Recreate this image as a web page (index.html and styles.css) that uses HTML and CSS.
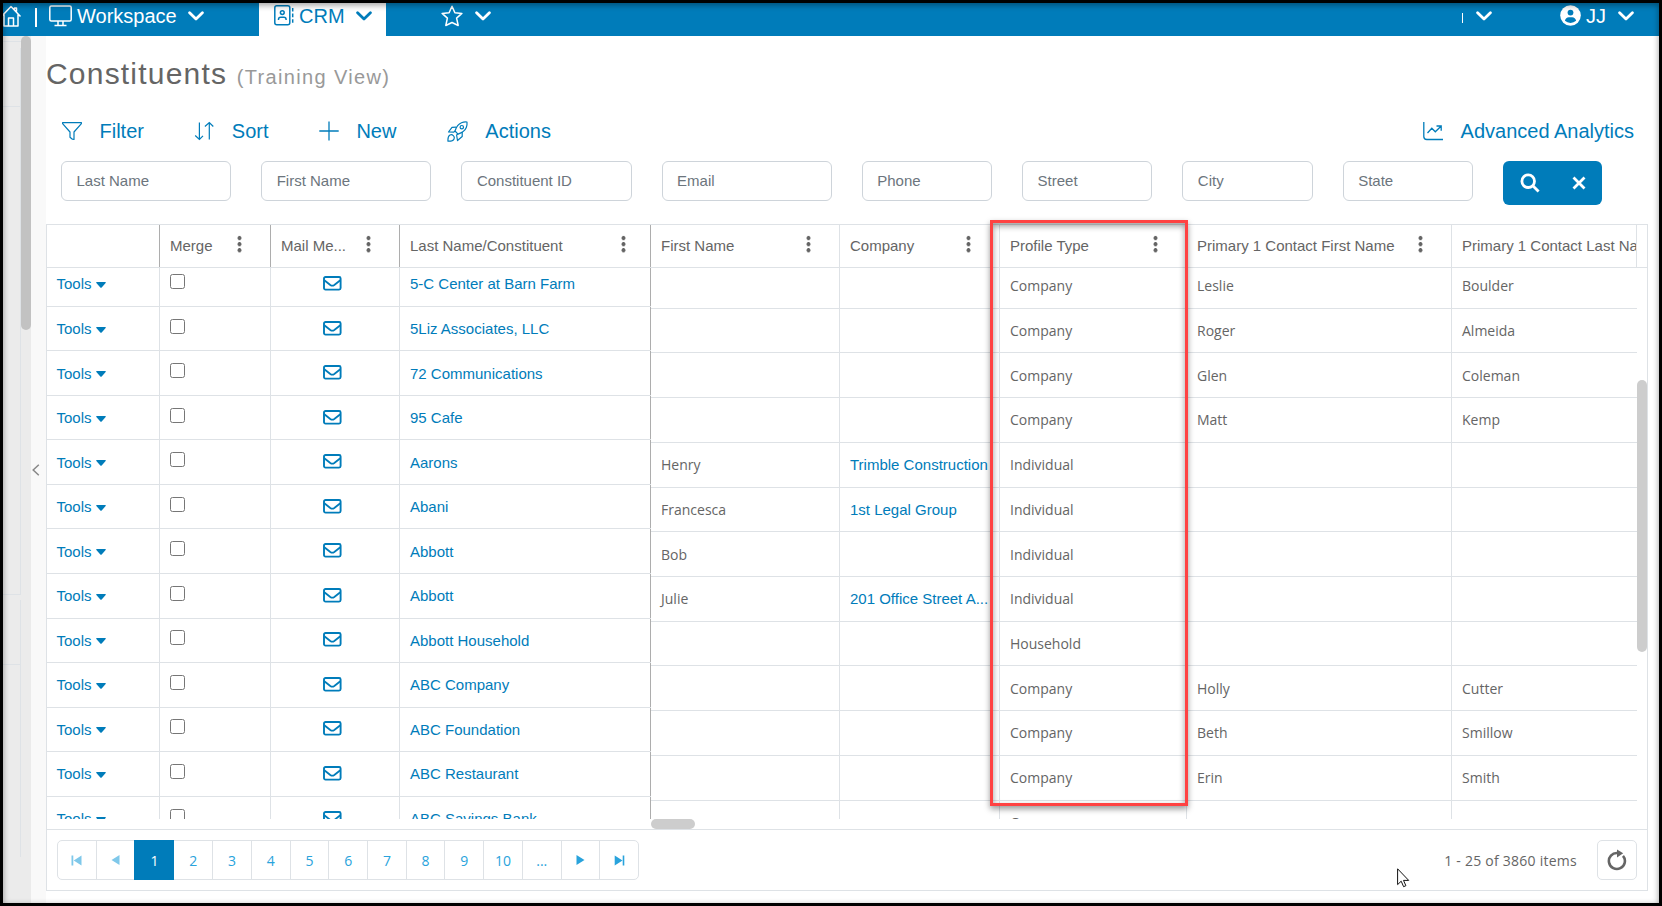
FILE: index.html
```html
<!DOCTYPE html>
<html lang="en">
<head>
    <meta charset="UTF-8">
    <meta name="viewport" content="width=device-width, initial-scale=1.0">
    <title>CRM - Constituents</title>
    <link rel="stylesheet" href="styles.css">
</head>
<body>
    <!-- shared icons -->
    <svg class="defs">
        <symbol id="chev" viewBox="0 0 16 10"><path d="M1.6 1.8 8 8l6.4-6.2" fill="none" stroke="currentColor" stroke-width="2.8" stroke-linecap="round" stroke-linejoin="round"/></symbol>
        <symbol id="mail" viewBox="0 0 19 15"><rect x="1" y="1" width="16.6" height="12.6" rx="1.5" fill="none" stroke="currentColor" stroke-width="1.9"/><path d="M1.3 4.2 7.3 9q2 1.4 4 0l6-4.8" fill="none" stroke="currentColor" stroke-width="1.8"/></symbol>
        <symbol id="caret" viewBox="0 0 10 6"><path d="M.9 0h8.2q1.2.2.5 1.1L5.7 5.5q-.7.7-1.4 0L.4 1.1Q-.3.2.9 0z" fill="currentColor"/></symbol>
    </svg>

    <!-- top bar -->
    <header class="topbar">
        <a class="home" href="#">
            <svg width="21" height="22" viewBox="0 0 21 22" fill="none" stroke="currentColor" stroke-width="1.5" stroke-linejoin="round"><path d="M.5 11.5 10 1.5l9.5 10M3 9.5V21h14V9.5M15.5 6.5V3h-2v1.5"/><path d="M7.5 21v-8h5v8"/></svg>
        </a>
        <span class="bar"></span>
        <a class="workspace" href="#">
            <svg width="23" height="22" viewBox="0 0 23 22" fill="none" stroke="currentColor" stroke-width="1.5"><rect x=".8" y="1" width="21.4" height="15" rx="1.5"/><path d="M9 16v4M14 16v4M5.5 20.4h12"/></svg>
            <span>Workspace</span>
            <svg class="chev"><use href="#chev"/></svg>
        </a>
        <a class="tab" href="#">
            <svg width="20" height="21" viewBox="0 0 20 21" fill="none" stroke="currentColor" stroke-width="1.5"><rect x=".8" y=".8" width="15" height="19" rx="2"/><circle cx="8.3" cy="7.6" r="1.9"/><path d="M4.5 15v-.6q0-2.2 2.2-2.2h3.2q2.2 0 2.2 2.2v.6"/><path d="M18.7 3v15" stroke-dasharray="3.6 2"/></svg>
            <span>CRM</span>
            <svg class="chev"><use href="#chev"/></svg>
        </a>
        <a class="fav" href="#">
            <svg width="22" height="22" viewBox="0 0 22 22" fill="none" stroke="currentColor" stroke-width="1.5" stroke-linejoin="round"><path d="m11 1.2 2.9 6.5 7 .7-5.3 4.7 1.6 7.4-6.2-3-6.2 3 1.6-7.4L1.1 8.4l7-.7z"/></svg>
            <svg class="chev"><use href="#chev"/></svg>
        </a>
        <a class="org" href="#">
            <span class="tick"></span>
            <svg class="chev"><use href="#chev"/></svg>
        </a>
        <a class="user" href="#">
            <svg width="21" height="21" viewBox="0 0 21 21"><circle cx="10.5" cy="10.5" r="10.3" fill="#fff"/><circle cx="10.5" cy="7.6" r="2.9" fill="#007cba"/><path d="M4.9 15.8q.8-3.6 4-3.6h3.2q3.2 0 4 3.6-2.300 2.100-5.600 2.100t-5.600-2.100z" fill="#007cba"/></svg>
            <span>JJ</span>
            <svg class="chev"><use href="#chev"/></svg>
        </a>
    </header>

    <div class="page">
        <!-- collapsed side panel -->
        <aside class="side">
            <div class="side-list">
                <div class="s1"></div>
                <div class="s2"></div>
                <div class="s3"></div>
                <div class="s4"></div>
                <div class="s5"></div>
            </div>
            <div class="side-scroll"></div>
        </aside>
        <div class="splitter">
            <svg width="8" height="12" viewBox="0 0 8 12"><path d="M6.800.7 1.200 6l5.600 5.300" fill="none" stroke="#888" stroke-width="1.500"/></svg>
        </div>

        <main class="main">
            <h1 class="title">Constituents <small>(Training View)</small></h1>

            <div class="toolbar">
                <a href="#">
                    <svg width="20" height="20" viewBox="0 0 20 20" fill="none" stroke="currentColor" stroke-width="1.200" stroke-linejoin="round"><path d="M.6 2.600v-1h18.800v1L12 11v7.400l-1.600-.2-2.400-2V11z"/></svg>
                    <span>Filter</span>
                </a>
                <a href="#">
                    <svg width="20" height="20" viewBox="0 0 20 20" fill="none" stroke="currentColor" stroke-width="1.200"><path d="M5.400 1.500v17M1.200 14.500l4.200 4 3.600-3.600M15.300 18.500v-17M10.900 5.500l4.400-4 4 4"/></svg>
                    <span>Sort</span>
                </a>
                <a href="#">
                    <svg width="20" height="20" viewBox="0 0 20 20" fill="none" stroke="currentColor" stroke-width="1.300"><path d="M10 .5v19M.3 10h19.400"/></svg>
                    <span>New</span>
                </a>
                <a href="#">
                    <svg width="21" height="21" viewBox="0 0 21 21" fill="none" stroke="currentColor" stroke-width="1.200" stroke-linejoin="round"><path d="M8 10Q10 3.500 14.500 1.700 17 .7 20 1q.3 3-.7 5.500-1.800 4.500-8.300 6.600z"/><circle cx="14.800" cy="6.200" r="1.700"/><path d="M9.300 6.200 5 6.400 1.500 11l5.300.2L8 10M15.200 11v4.500L10.500 19.500 9.600 14l1.400-1"/><path d="M1 20.200q-.4-5 2-6.200 1.800-.8 3.300.6t.7 3.300q-1 2.500-6 2.300z"/></svg>
                    <span>Actions</span>
                </a>
                <a class="analytics" href="#">
                    <svg width="20" height="20" viewBox="0 0 20 20" fill="none" stroke="currentColor" stroke-width="1.300"><path d="M.8 1v14.500q0 3 3 3H20"/><path d="m4.500 12 4.300-4.700 3.500 3.500L18 5.300M13.500 5h4.700v4.700"/></svg>
                    <span>Advanced Analytics</span>
                </a>
            </div>

            <form class="search">
                <input type="text" placeholder="Last Name">
                <input type="text" placeholder="First Name">
                <input type="text" placeholder="Constituent ID">
                <input type="text" placeholder="Email">
                <input type="text" class="short" placeholder="Phone">
                <input type="text" class="short" placeholder="Street">
                <input type="text" class="short" placeholder="City">
                <input type="text" class="short" placeholder="State">
                <div class="search-btn">
                    <svg width="20" height="20" viewBox="0 0 20 20" fill="none" stroke="#fff" stroke-width="2.800"><circle cx="8.200" cy="8.200" r="6.300"/><path d="m12.800 12.800 5.800 5.800"/></svg>
                    <svg width="14" height="14" viewBox="0 0 14 14" fill="none" stroke="#fff" stroke-width="2.800"><path d="m1.500 1.500 11 11M12.500 1.500l-11 11"/></svg>
                </div>
            </form>

            <!-- grid -->
            <section class="grid">
                <div class="grid-head">
                    <div class="lock cols-l">
                        <div class="th"></div>
                        <div class="th">Merge<i class="dots"></i></div>
                        <div class="th">Mail Me...<i class="dots"></i></div>
                        <div class="th wide">Last Name/Constituent<i class="dots"></i></div>
                    </div>
                    <div class="free cols-r">
                        <div class="th">First Name<i class="dots"></i></div>
                        <div class="th">Company<i class="dots"></i></div>
                        <div class="th">Profile Type<i class="dots"></i></div>
                        <div class="th">Primary 1 Contact First Name<i class="dots"></i></div>
                        <div class="th last">Primary 1 Contact Last Name</div>
                    </div>
                </div>
                <div class="grid-body">
                    <div class="lock rows" id="lockRows"></div>
                    <div class="free rows" id="freeRows"></div>
                    <div class="vscroll"></div>
                </div>
                <div class="hscroll"><div></div></div>
                <div class="pager">
                    <div class="pages">
                        <a class="off"><svg width="11" height="11" viewBox="0 0 11 11" fill="currentColor"><path d="M.5.500h1.800v10H.5zM10.500.500v10l-7.800-5z"/></svg></a>
                        <a class="off"><svg width="9" height="10" viewBox="0 0 9 10" fill="currentColor"><path d="M8.500 0v10L.5 5z"/></svg></a>
                        <a class="on">1</a>
                        <a>2</a>
                        <a>3</a>
                        <a>4</a>
                        <a>5</a>
                        <a>6</a>
                        <a>7</a>
                        <a>8</a>
                        <a>9</a>
                        <a>10</a>
                        <a>...</a>
                        <a><svg width="9" height="10" viewBox="0 0 9 10" fill="currentColor"><path d="M.5 0v10l8-5z"/></svg></a>
                        <a><svg width="11" height="11" viewBox="0 0 11 11" fill="currentColor"><path d="M8.700.500h1.600v10H8.700zM.700.500v10l7.800-5z"/></svg></a>
                    </div>
                    <span class="info">1 - 25 of 3860 items</span>
                    <a class="refresh"><svg width="20" height="22" viewBox="0 0 20 22"><path d="M16 6.800A8 8 0 1 1 10.500 4" fill="none" stroke="#656565" stroke-width="2.600"/><path d="M10 .6 16.200 4.300 10 8.600z" fill="#656565"/></svg></a>
                </div>
            </section>
        </main>
    </div>

    <!-- highlight over the Profile Type column -->
    <div class="mark"></div>
    <svg class="cursor" width="13" height="20" viewBox="0 0 13 20"><path d="M.6.800v15.800l3.600-3.400 2.400 5.500 2.300-1-2.400-5.300h5.200z" fill="#fff" stroke="#111" stroke-width="1"/></svg>

    <script src="script.js"></script>
</body>
</html>
```
FILE: styles.css
```css
* {
    box-sizing: border-box;
}

:root {
    --blue: #007cba;
    --line: #dee2e6;
    --dark: #adadad;
    --text: #656565;
}

body {
    position: relative;
    display: flex;
    flex-direction: column;
    margin: 0;
    width: 1662px;
    height: 906px;
    border: 3px solid #000;
    overflow: hidden;
    background: #fff;
    font: 15px "Liberation Sans", Arial, sans-serif;
    color: var(--text);
}

/* inner shadow of the window frame */
body::after {
    content: "";
    position: absolute;
    inset: 0;
    box-shadow: inset 0 2px 6px rgba(0, 0, 0, .4);
    pointer-events: none;
}

a {
    color: var(--blue);
    text-decoration: none;
}

.defs {
    display: none;
}

/* top bar */
.topbar {
    display: flex;
    flex: none;
    height: 33px;
    background: var(--blue);
}

.topbar a {
    display: flex;
    align-items: center;
    padding-bottom: 8px;
    color: #fff;
    font-size: 20px;
    line-height: 24px;
}

.topbar svg {
    flex: none;
}

.chev {
    width: 16px;
    height: 10px;
}

.topbar .home {
    width: 33px;
    margin-left: -2px;
}

.bar {
    width: 2px;
    height: 19px;
    margin: 5px 12px 0 1px;
    background: #fff;
}

.topbar .workspace {
    width: 210px;
    gap: 5px;
}

.workspace .chev {
    margin-left: 6px;
}

.topbar .tab {
    width: 127px;
    padding-left: 15px;
    gap: 5px;
    background: #fff;
    color: var(--blue);
}

.tab .chev {
    margin-left: 6px;
}

.topbar .fav {
    margin-left: 55px;
    gap: 12px;
}

.topbar .org {
    margin-left: auto;
    gap: 13px;
}

.tick {
    width: 1px;
    height: 10px;
    margin-top: 4px;
    background: #fff;
}

.topbar .user {
    margin: 0 25px 0 68px;
    gap: 5px;
}

.user .chev {
    margin-left: 7px;
}

/* page */
.page {
    display: flex;
    flex: 1;
    min-height: 0;
}

.side {
    display: flex;
    width: 28px;
    background: #ebebeb;
}

.side-list {
    width: 18px;
}

.side-list div {
    border-right: 1px solid var(--line);
    border-bottom: 1px solid var(--line);
}

.side-list .s1 {
    height: 6px;
    margin-bottom: 6px;
    border-right: 0;
}

.s2 {
    height: 59px;
}

.s3 {
    height: 488px;
}

.s4 {
    height: 65px;
    margin-top: 5px;
}

.side-list .s5 {
    height: 192px;
    border-bottom: 0;
}

.side-scroll {
    width: 10px;
    height: 294px;
    border-radius: 5px;
    background: #c2c2c2;
}

.splitter {
    display: flex;
    align-items: center;
    width: 15px;
    padding-left: 1px;
    background: #f9f9f9;
}

.main {
    flex: 1;
    min-width: 0;
    padding-right: 11px;
}

.title {
    margin: 0;
    padding-top: 20px;
    height: 78px;
    font-size: 30px;
    line-height: 35px;
    font-weight: normal;
    letter-spacing: 1.2px;
    white-space: nowrap;
}

.title small {
    font-size: 20px;
    letter-spacing: 1.35px;
    color: #999;
}

.toolbar {
    display: flex;
    align-items: center;
    gap: 50.4px;
    height: 34px;
    padding: 0 14px 0 16px;
    font-size: 20px;
}

.toolbar a {
    display: flex;
    align-items: center;
    gap: 17.5px;
    white-space: nowrap;
}

.toolbar .analytics {
    margin-left: auto;
}

/* search fields */
.search {
    display: flex;
    gap: 30px;
    height: 76px;
    padding: 13px 0 0 15px;
}

.search input {
    width: 170.2px;
    height: 40px;
    padding: 0 15px 2px 14.5px;
    border: 1px solid #ced4da;
    border-radius: 6px;
    font: inherit;
    outline: none;
}

.search input::placeholder {
    color: #6c757d;
    opacity: 1;
}

.search .short {
    width: 130.3px;
}

.search-btn {
    display: flex;
    align-items: center;
    justify-content: center;
    gap: 32px;
    width: 99px;
    height: 44px;
    padding: 0 0 1px 1px;
    border-radius: 6px;
    background: var(--blue);
}

/* grid */
.grid {
    width: 1602px;
    height: 667px;
    border: 1px solid var(--line);
}

.grid-head {
    display: flex;
    height: 43px;
    border-bottom: 1px solid var(--line);
}

.lock {
    flex: none;
    width: 604px;
}

.free {
    flex: none;
    width: 986px;
    overflow: hidden;
}

.cols-l {
    display: grid;
    grid-template-columns: 113px 111px 129px 251px;
}

.cols-r {
    display: grid;
    grid-template-columns: 189px 160px 187px 265px 185px;
}

.th {
    display: flex;
    align-items: center;
    justify-content: space-between;
    padding: 0 28px 2px 10px;
    border-right: 1px solid var(--line);
    white-space: nowrap;
    overflow: hidden;
}

.cols-l .th {
    border-color: var(--dark);
}

.th.wide {
    padding-right: 24px;
}

.th.last {
    padding-right: 0;
}

/* three dots menu */
.dots {
    width: 5px;
    height: 18px;
    margin-bottom: 2px;
    background: radial-gradient(circle, #656565 1.8px, transparent 2.3px) 0 0 / 5px 6.1px;
}

.grid-body {
    display: flex;
    height: 551px;
    overflow: hidden;
}

.rows.lock {
    border-right: 1px solid var(--dark);
}

#lockRows .row:first-child {
    margin-top: -5.8px;
}

#freeRows .row:first-child {
    margin-top: -4.1px;
}

.rows .row > div {
    display: flex;
    align-items: center;
    padding: 0 10px;
    border-right: 1px solid var(--line);
    border-bottom: 1px solid var(--line);
    white-space: nowrap;
    overflow: hidden;
}

.rows .row > div:last-child {
    border-right: 0;
}

#lockRows .row {
    height: 44.55px;
}

#freeRows .row {
    height: 44.73px;
    font-family: "Open Sans", sans-serif;
    font-size: 14px;
}

#freeRows a {
    font-family: "Liberation Sans", Arial, sans-serif;
    font-size: 15px;
}

.rows .row > .tools {
    padding-left: 9.5px;
}

.tools svg {
    width: 10px;
    height: 6px;
    margin: 2px 0 0 4.5px;
    color: var(--blue);
}

.check input {
    width: 15px;
    height: 15px;
    margin: 0 0 5px;
}

.rows .row > .mail {
    padding-left: 52px;
    color: var(--blue);
}

.mail svg {
    width: 19px;
    height: 15px;
    margin-bottom: 1px;
}

.vscroll {
    width: 10px;
    height: 272px;
    margin-top: 112px;
    border-radius: 5px;
    background: #cdcdcd;
}

.hscroll {
    height: 10px;
    padding-left: 604px;
}

.hscroll div {
    width: 44px;
    height: 10px;
    border-radius: 5px;
    background: #cdcdcd;
}

/* pager */
.pager {
    display: flex;
    align-items: center;
    height: 61px;
    padding: 0 10px;
    border-top: 1px solid var(--line);
    font-family: "Open Sans", sans-serif;
}

.pages {
    display: flex;
    width: 582px;
    height: 40px;
    border: 1px solid var(--line);
    border-radius: 5px;
}

.pages a {
    display: flex;
    flex: 1;
    align-items: center;
    justify-content: center;
    border-right: 1px solid var(--line);
    color: #29a3dc;
    font-size: 14px;
}

.pages a:last-child {
    border-right: 0;
}

.pages .off {
    color: #7fc8ea;
}

.pages .on {
    flex: 0 0 40px;
    margin: -1px 0 -1px -1px;
    border: 0;
    background: var(--blue);
    color: #fff;
}

.info {
    margin-left: auto;
    font-size: 14px;
    letter-spacing: .25px;
}

.refresh {
    display: flex;
    align-items: center;
    justify-content: center;
    width: 40px;
    height: 40px;
    margin-left: 20px;
    padding-bottom: 1px;
    border: 1px solid var(--line);
    border-radius: 5px;
}

.mark {
    position: absolute;
    left: 987px;
    top: 217px;
    width: 198px;
    height: 586px;
    border: 3px solid #ff4242;
    box-shadow: 0 3px 6px rgba(0, 0, 0, .4), inset 0 3px 6px rgba(0, 0, 0, .4);
}

.cursor {
    position: absolute;
    left: 1394px;
    top: 865px;
}
```
FILE: script.js
```javascript
// last name, first name, company, profile type, contact first, contact last
const rows = [
    ["5-C Center at Barn Farm", "", "", "Company", "Leslie", "Boulder"],
    ["5Liz Associates, LLC", "", "", "Company", "Roger", "Almeida"],
    ["72 Communications", "", "", "Company", "Glen", "Coleman"],
    ["95 Cafe", "", "", "Company", "Matt", "Kemp"],
    ["Aarons", "Henry", "Trimble Construction", "Individual", "", ""],
    ["Abani", "Francesca", "1st Legal Group", "Individual", "", ""],
    ["Abbott", "Bob", "", "Individual", "", ""],
    ["Abbott", "Julie", "201 Office Street A...", "Individual", "", ""],
    ["Abbott Household", "", "", "Household", "", ""],
    ["ABC Company", "", "", "Company", "Holly", "Cutter"],
    ["ABC Foundation", "", "", "Company", "Beth", "Smillow"],
    ["ABC Restaurant", "", "", "Company", "Erin", "Smith"],
    ["ABC Savings Bank", "", "", "Company", "", ""]
];

let lockHtml = "";
let freeHtml = "";

rows.forEach(function (r) {
    lockHtml += `<div class="row cols-l">
        <div class="tools"><a href="#">Tools</a><svg><use href="#caret"/></svg></div>
        <div class="check"><input type="checkbox"></div>
        <div class="mail"><svg><use href="#mail"/></svg></div>
        <div><a href="#">${r[0]}</a></div>
    </div>`;

    freeHtml += `<div class="row cols-r">
        <div>${r[1]}</div>
        <div><a href="#">${r[2]}</a></div>
        <div>${r[3]}</div>
        <div>${r[4]}</div>
        <div>${r[5]}</div>
    </div>`;
});

document.querySelector("#lockRows").innerHTML = lockHtml;
document.querySelector("#freeRows").innerHTML = freeHtml;
```
